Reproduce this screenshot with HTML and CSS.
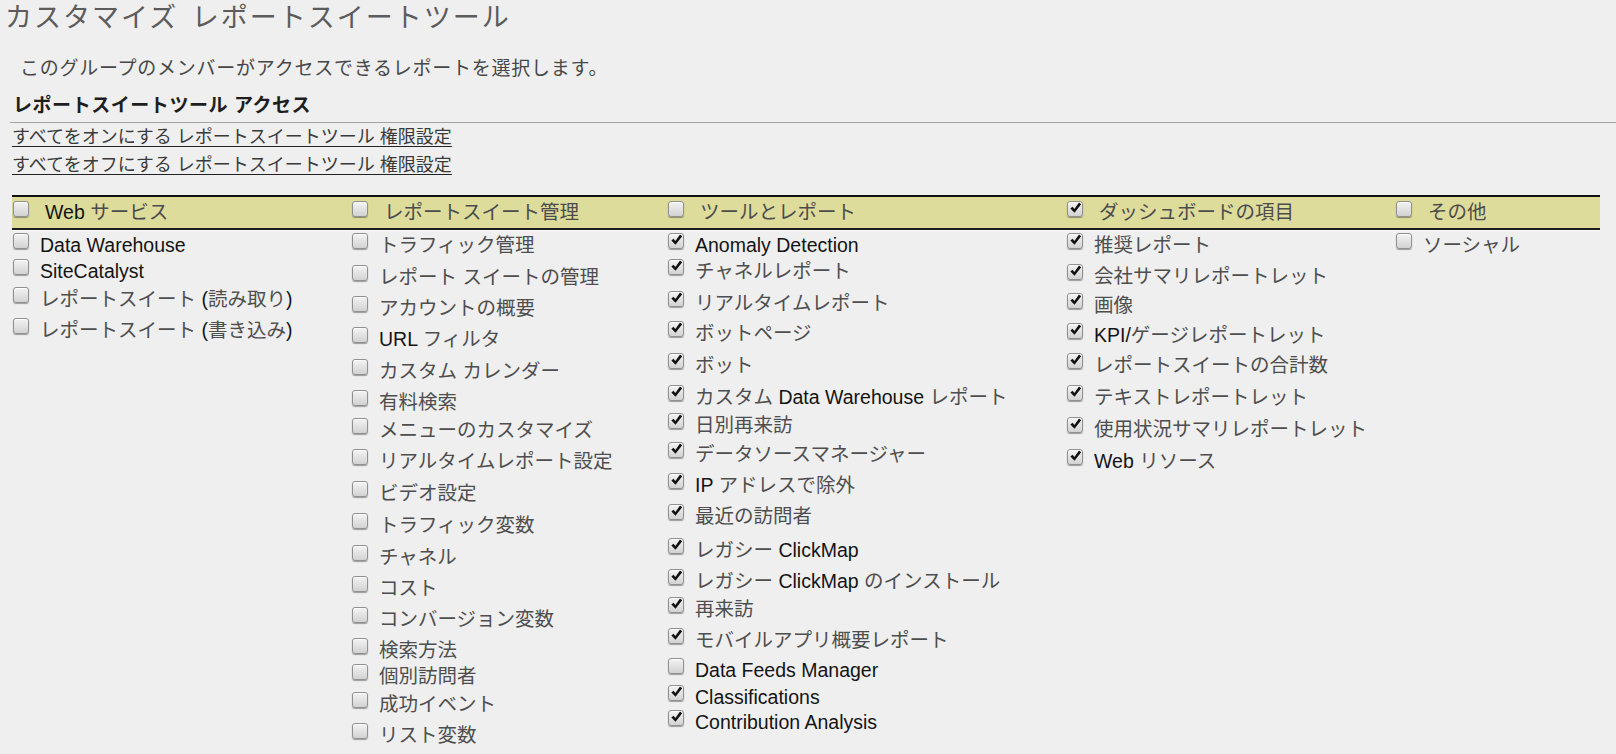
FILE: index.html
```html
<!DOCTYPE html>
<html lang="ja">
<head>
<meta charset="utf-8">
<title>カスタマイズ レポートスイートツール</title>
<link rel="stylesheet" href="styles.css">
</head>
<body>
<h1 class="page-title">カスタマイズ レポートスイートツール</h1>
<p class="intro">このグループのメンバーがアクセスできるレポートを選択します。</p>
<h2 class="section-title">レポートスイートツール アクセス</h2>
<div class="links">
  <a class="link" href="#">すべてをオンにする レポートスイートツール 権限設定</a>
  <a class="link" href="#">すべてをオフにする レポートスイートツール 権限設定</a>
</div>

<div class="perm-table">
  <div class="perm-head">
    <div class="head-cell"><span class="cb"></span><span class="head-label"><span class="en">Web</span> サービス</span></div>
    <div class="head-cell"><span class="cb"></span><span class="head-label">レポートスイート管理</span></div>
    <div class="head-cell"><span class="cb"></span><span class="head-label">ツールとレポート</span></div>
    <div class="head-cell"><span class="cb on"><svg viewBox="0 0 15 15"><path d="M2.4 7.6 L4.5 5.8 L6.4 8.1 L11 1.6 L13.2 3.2 L6.5 11.8 Z"/></svg></span><span class="head-label">ダッシュボードの項目</span></div>
    <div class="head-cell"><span class="cb"></span><span class="head-label">その他</span></div>
  </div>

  <div class="perm-body">
    <div class="col">
      <div class="item h26"><span class="cb"></span><span class="label en">Data Warehouse</span></div>
      <div class="item h28"><span class="cb"></span><span class="label en">SiteCatalyst</span></div>
      <div class="item h31"><span class="cb"></span><span class="label">レポートスイート <span class="en">(</span>読み取り<span class="en">)</span></span></div>
      <div class="item h31"><span class="cb"></span><span class="label">レポートスイート <span class="en">(</span>書き込み<span class="en">)</span></span></div>
    </div>

    <div class="col">
      <div class="item h32"><span class="cb"></span><span class="label">トラフィック管理</span></div>
      <div class="item h31"><span class="cb"></span><span class="label">レポート スイートの管理</span></div>
      <div class="item h31"><span class="cb"></span><span class="label">アカウントの概要</span></div>
      <div class="item h32"><span class="cb"></span><span class="label"><span class="en">URL</span> フィルタ</span></div>
      <div class="item h31"><span class="cb"></span><span class="label">カスタム カレンダー</span></div>
      <div class="item h28"><span class="cb"></span><span class="label">有料検索</span></div>
      <div class="item h31"><span class="cb"></span><span class="label">メニューのカスタマイズ</span></div>
      <div class="item h32"><span class="cb"></span><span class="label">リアルタイムレポート設定</span></div>
      <div class="item h32"><span class="cb"></span><span class="label">ビデオ設定</span></div>
      <div class="item h32"><span class="cb"></span><span class="label">トラフィック変数</span></div>
      <div class="item h31"><span class="cb"></span><span class="label">チャネル</span></div>
      <div class="item h31"><span class="cb"></span><span class="label">コスト</span></div>
      <div class="item h31"><span class="cb"></span><span class="label">コンバージョン変数</span></div>
      <div class="item h26"><span class="cb"></span><span class="label">検索方法</span></div>
      <div class="item h28"><span class="cb"></span><span class="label">個別訪問者</span></div>
      <div class="item h31"><span class="cb"></span><span class="label">成功イベント</span></div>
      <div class="item h31"><span class="cb"></span><span class="label">リスト変数</span></div>
      <div class="item h31"><span class="cb"></span><span class="label"></span></div>
    </div>

    <div class="col">
      <div class="item h26"><span class="cb on"><svg viewBox="0 0 15 15"><path d="M2.4 7.6 L4.5 5.8 L6.4 8.1 L11 1.6 L13.2 3.2 L6.5 11.8 Z"/></svg></span><span class="label en">Anomaly Detection</span></div>
      <div class="item h32"><span class="cb on"><svg viewBox="0 0 15 15"><path d="M2.4 7.6 L4.5 5.8 L6.4 8.1 L11 1.6 L13.2 3.2 L6.5 11.8 Z"/></svg></span><span class="label">チャネルレポート</span></div>
      <div class="item h30"><span class="cb on"><svg viewBox="0 0 15 15"><path d="M2.4 7.6 L4.5 5.8 L6.4 8.1 L11 1.6 L13.2 3.2 L6.5 11.8 Z"/></svg></span><span class="label">リアルタイムレポート</span></div>
      <div class="item h32"><span class="cb on"><svg viewBox="0 0 15 15"><path d="M2.4 7.6 L4.5 5.8 L6.4 8.1 L11 1.6 L13.2 3.2 L6.5 11.8 Z"/></svg></span><span class="label">ボットページ</span></div>
      <div class="item h32"><span class="cb on"><svg viewBox="0 0 15 15"><path d="M2.4 7.6 L4.5 5.8 L6.4 8.1 L11 1.6 L13.2 3.2 L6.5 11.8 Z"/></svg></span><span class="label">ボット</span></div>
      <div class="item h28"><span class="cb on"><svg viewBox="0 0 15 15"><path d="M2.4 7.6 L4.5 5.8 L6.4 8.1 L11 1.6 L13.2 3.2 L6.5 11.8 Z"/></svg></span><span class="label">カスタム <span class="en">Data Warehouse</span> レポート</span></div>
      <div class="item h29"><span class="cb on"><svg viewBox="0 0 15 15"><path d="M2.4 7.6 L4.5 5.8 L6.4 8.1 L11 1.6 L13.2 3.2 L6.5 11.8 Z"/></svg></span><span class="label">日別再来訪</span></div>
      <div class="item h31"><span class="cb on"><svg viewBox="0 0 15 15"><path d="M2.4 7.6 L4.5 5.8 L6.4 8.1 L11 1.6 L13.2 3.2 L6.5 11.8 Z"/></svg></span><span class="label">データソースマネージャー</span></div>
      <div class="item h31"><span class="cb on"><svg viewBox="0 0 15 15"><path d="M2.4 7.6 L4.5 5.8 L6.4 8.1 L11 1.6 L13.2 3.2 L6.5 11.8 Z"/></svg></span><span class="label"><span class="en">IP</span> アドレスで除外</span></div>
      <div class="item h34"><span class="cb on"><svg viewBox="0 0 15 15"><path d="M2.4 7.6 L4.5 5.8 L6.4 8.1 L11 1.6 L13.2 3.2 L6.5 11.8 Z"/></svg></span><span class="label">最近の訪問者</span></div>
      <div class="item h31"><span class="cb on"><svg viewBox="0 0 15 15"><path d="M2.4 7.6 L4.5 5.8 L6.4 8.1 L11 1.6 L13.2 3.2 L6.5 11.8 Z"/></svg></span><span class="label">レガシー <span class="en">ClickMap</span></span></div>
      <div class="item h28"><span class="cb on"><svg viewBox="0 0 15 15"><path d="M2.4 7.6 L4.5 5.8 L6.4 8.1 L11 1.6 L13.2 3.2 L6.5 11.8 Z"/></svg></span><span class="label">レガシー <span class="en">ClickMap</span> のインストール</span></div>
      <div class="item h31"><span class="cb on"><svg viewBox="0 0 15 15"><path d="M2.4 7.6 L4.5 5.8 L6.4 8.1 L11 1.6 L13.2 3.2 L6.5 11.8 Z"/></svg></span><span class="label">再来訪</span></div>
      <div class="item h30"><span class="cb on"><svg viewBox="0 0 15 15"><path d="M2.4 7.6 L4.5 5.8 L6.4 8.1 L11 1.6 L13.2 3.2 L6.5 11.8 Z"/></svg></span><span class="label">モバイルアプリ概要レポート</span></div>
      <div class="item h27"><span class="cb"></span><span class="label en">Data Feeds Manager</span></div>
      <div class="item h25"><span class="cb on"><svg viewBox="0 0 15 15"><path d="M2.4 7.6 L4.5 5.8 L6.4 8.1 L11 1.6 L13.2 3.2 L6.5 11.8 Z"/></svg></span><span class="label en">Classifications</span></div>
      <div class="item h30"><span class="cb on"><svg viewBox="0 0 15 15"><path d="M2.4 7.6 L4.5 5.8 L6.4 8.1 L11 1.6 L13.2 3.2 L6.5 11.8 Z"/></svg></span><span class="label en">Contribution Analysis</span></div>
    </div>

    <div class="col">
      <div class="item h31"><span class="cb on"><svg viewBox="0 0 15 15"><path d="M2.4 7.6 L4.5 5.8 L6.4 8.1 L11 1.6 L13.2 3.2 L6.5 11.8 Z"/></svg></span><span class="label">推奨レポート</span></div>
      <div class="item h29"><span class="cb on"><svg viewBox="0 0 15 15"><path d="M2.4 7.6 L4.5 5.8 L6.4 8.1 L11 1.6 L13.2 3.2 L6.5 11.8 Z"/></svg></span><span class="label">会社サマリレポートレット</span></div>
      <div class="item h30"><span class="cb on"><svg viewBox="0 0 15 15"><path d="M2.4 7.6 L4.5 5.8 L6.4 8.1 L11 1.6 L13.2 3.2 L6.5 11.8 Z"/></svg></span><span class="label">画像</span></div>
      <div class="item h30"><span class="cb on"><svg viewBox="0 0 15 15"><path d="M2.4 7.6 L4.5 5.8 L6.4 8.1 L11 1.6 L13.2 3.2 L6.5 11.8 Z"/></svg></span><span class="label"><span class="en">KPI/</span>ゲージレポートレット</span></div>
      <div class="item h32"><span class="cb on"><svg viewBox="0 0 15 15"><path d="M2.4 7.6 L4.5 5.8 L6.4 8.1 L11 1.6 L13.2 3.2 L6.5 11.8 Z"/></svg></span><span class="label">レポートスイートの合計数</span></div>
      <div class="item h32"><span class="cb on"><svg viewBox="0 0 15 15"><path d="M2.4 7.6 L4.5 5.8 L6.4 8.1 L11 1.6 L13.2 3.2 L6.5 11.8 Z"/></svg></span><span class="label">テキストレポートレット</span></div>
      <div class="item h32"><span class="cb on"><svg viewBox="0 0 15 15"><path d="M2.4 7.6 L4.5 5.8 L6.4 8.1 L11 1.6 L13.2 3.2 L6.5 11.8 Z"/></svg></span><span class="label">使用状況サマリレポートレット</span></div>
      <div class="item h31"><span class="cb on"><svg viewBox="0 0 15 15"><path d="M2.4 7.6 L4.5 5.8 L6.4 8.1 L11 1.6 L13.2 3.2 L6.5 11.8 Z"/></svg></span><span class="label"><span class="en">Web</span> リソース</span></div>
    </div>

    <div class="col">
      <div class="item h31"><span class="cb"></span><span class="label">ソーシャル</span></div>
    </div>
  </div>
</div>
</body>
</html>
```

FILE: styles.css
```css
html, body {
  height: 100%;
  overflow: hidden;
}

body {
  margin: 0;
  background: #efefef;
  color: #4a4a4a;
  font-family: "Liberation Sans", "Noto Sans CJK JP", sans-serif;
}

.page-title {
  margin: 0;
  padding-left: 5px;
  font-size: 27px;
  line-height: 36px;
  font-weight: 400;
  letter-spacing: 2px;
  word-spacing: 4px;
  color: #5c5c5c;
}

.intro {
  margin: 21px 0 0;
  padding-left: 20px;
  font-size: 19px;
  line-height: 24px;
  letter-spacing: 0.75px;
  color: #474747;
}

.section-title {
  margin: 13px 0 0 10px;
  padding: 0 0 4px 3px;
  font-size: 19px;
  line-height: 24px;
  font-weight: 700;
  letter-spacing: 0.55px;
  color: #1e1e1e;
  border-bottom: 1px solid #a3a3a3;
}

.links {
  padding-left: 12px;
  font-size: 18px;
  line-height: 28px;
}

.link {
  display: block;
  width: max-content;
  color: #3a3a3a;
  text-decoration: underline;
  text-decoration-color: #222;
  text-underline-offset: 3px;
}

.perm-table {
  margin: 16px 16px 0 12px;
}

.perm-head,
.perm-body {
  display: grid;
  grid-template-columns: 339px 316px 399px 329px 205px;
}

.perm-head {
  height: 31px;
  background: #dedc9b;
  border-top: 2px solid #111;
  border-bottom: 2px solid #1c1c1c;
  box-shadow: 0 1px 0 #fbfbfb;
}

.head-cell {
  display: flex;
  align-items: flex-start;
  padding-top: 3px;
  font-size: 19.5px;
  line-height: 24px;
  color: #4c4c4c;
}

.head-cell .cb {
  margin-top: 1px;
}

.head-label {
  margin-left: 16px;
  white-space: nowrap;
}

.perm-body {
  align-items: start;
}

.col {
  display: flex;
  flex-direction: column;
}

.item {
  display: flex;
  align-items: flex-start;
  box-sizing: border-box;
  padding-top: 3px;
  font-size: 19.5px;
  line-height: 24px;
  color: #4e4e4e;
  white-space: nowrap;
}

.item .cb {
  margin-top: 0;
}

.label {
  margin-left: 11px;
}

.en {
  color: #141414;
}

.cb {
  flex: none;
  box-sizing: border-box;
  width: 16px;
  height: 16px;
  margin-left: 1px;
  border: 1px solid #909090;
  border-radius: 3px;
  background: linear-gradient(to bottom, #f3f3f3, #d2d2d2);
  box-shadow: 0 1px 1px rgba(0, 0, 0, 0.35), inset 0 1px 0 #ffffff;
  position: relative;
}

.cb svg {
  position: absolute;
  left: 0;
  top: -1px;
  width: 15px;
  height: 15px;
}

.cb svg path {
  fill: #111;
}

.h25 { height: 25px; }
.h26 { height: 26px; }
.h27 { height: 27px; }
.h28 { height: 28px; }
.h29 { height: 29px; }
.h30 { height: 30px; }
.h31 { height: 31px; }
.h32 { height: 32px; }
.h34 { height: 34px; }
```
